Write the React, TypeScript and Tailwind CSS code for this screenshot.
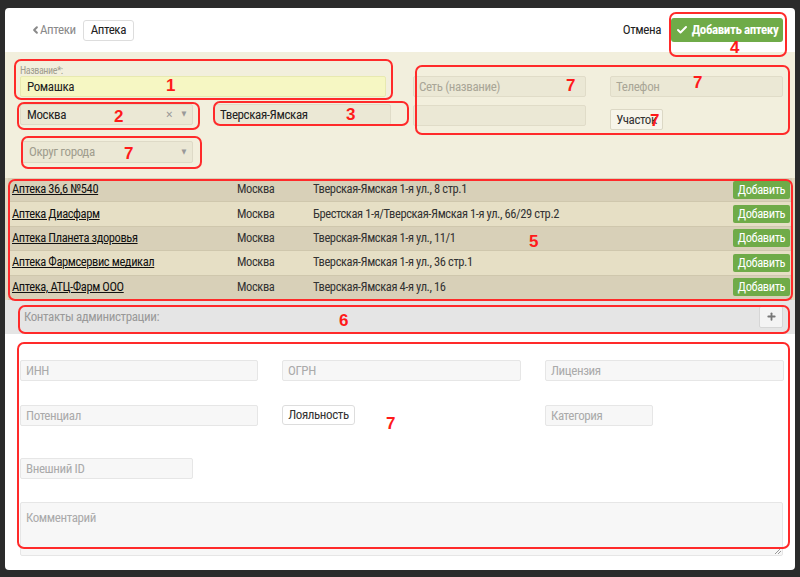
import { Check, ChevronLeft, Plus } from "lucide-react";

const FONT = "font-['Roboto_Condensed','Liberation_Sans_Narrow','DejaVu_Sans_Condensed',sans-serif] tracking-[-0.4px]";

const pharmacies = [
  { name: "Аптека 36,6 №540", city: "Москва", address: "Тверская-Ямская 1-я ул., 8 стр.1" },
  { name: "Аптека Диасфарм", city: "Москва", address: "Брестская 1-я/Тверская-Ямская 1-я ул., 66/29 стр.2" },
  { name: "Аптека Планета здоровья", city: "Москва", address: "Тверская-Ямская 1-я ул., 11/1" },
  { name: "Аптека Фармсервис медикал", city: "Москва", address: "Тверская-Ямская 1-я ул., 36 стр.1" },
  { name: "Аптека, АТЦ-Фарм ООО", city: "Москва", address: "Тверская-Ямская 4-я ул., 16" },
];

function Mark({ className }: { className: string }) {
  return <div className={`absolute border-2 border-[#ff2a2a] rounded-[7px] pointer-events-none ${className}`} />;
}

function Num({ className, n }: { className: string; n: string }) {
  return (
    <span className={`absolute font-['Liberation_Sans',sans-serif] tracking-normal font-bold text-[17px] leading-none text-[#ff1a1a] ${className}`}>
      {n}
    </span>
  );
}

function BeigeInput({ w, text, placeholder }: { w: string; text?: string; placeholder?: string }) {
  return (
    <div
      className={`${w} h-[21px] rounded-[2px] border border-[#e0dcc8] bg-[#ebe8d5] px-[5px] flex items-center text-[13px] ${
        text ? "text-[#222]" : "text-[#a9a697]"
      }`}
    >
      {text ?? placeholder}
    </div>
  );
}

function WhiteInput({ w, placeholder }: { w: string; placeholder: string }) {
  return (
    <div className={`${w} h-[21px] rounded-[2px] border border-[#e6e6e6] bg-[#f7f7f7] px-[5px] flex items-center text-[13px] text-[#aaa]`}>
      {placeholder}
    </div>
  );
}

export default function App() {
  return (
    <div className={`relative w-[800px] h-[577px] bg-[#2b2b2b] pt-[8px] px-[5px] overflow-hidden ${FONT}`}>
      <div className="h-[562px] bg-white rounded-[4px] overflow-hidden flex flex-col">
        {/* header */}
        <div className="h-[44px] flex items-center justify-between pl-[25px] pr-[12px]">
          <div className="flex items-center gap-[7px]">
            <span className="flex items-center text-[13px] text-[#8a8a8a]">
              <ChevronLeft className="w-[11px] h-[12px] -mr-[1px]" strokeWidth={4.5} />
              Аптеки
            </span>
            <span className="h-[21px] px-[7px] flex items-center rounded-[3px] border border-[#ddd] text-[13px] text-[#222]">Аптека</span>
          </div>
          <div className="flex items-center gap-[10px]">
            <span className="text-[13px] text-[#222]">Отмена</span>
            <button className="h-[24px] w-[112px] rounded-[3px] bg-[#6fab48] flex items-center justify-center gap-[4px] text-[13px] font-bold text-white">
              <Check className="w-[12px] h-[12px]" strokeWidth={4} />
              Добавить аптеку
            </button>
          </div>
        </div>

        {/* beige form */}
        <div className="h-[126px] bg-[#f2efdd] flex pl-[15px] pt-[13px]">
          <div className="w-[371px] flex flex-col">
            <span className="h-[11px] text-[10px] leading-[11px] text-[#a09d8e]">Название*:</span>
            <div className="h-[21px] w-[366px] rounded-[2px] border border-[#e8e9b0] bg-[#f6f7c3] px-[6px] flex items-center text-[13px] text-[#222]">
              Ромашка
            </div>
            <div className="mt-[7px] flex gap-[21px]">
              <div className="w-[174px] h-[21px] rounded-[2px] border border-[#dedac7] bg-[#ebe8d5] pl-[6px] pr-[6px] flex items-center text-[13px] text-[#222]">
                <span className="flex-1">Москва</span>
                <span className="text-[10px] text-[#999] mr-[9px]">✕</span>
                <span className="text-[7px] text-[#999]">▼</span>
              </div>
              <BeigeInput w="w-[178px]" text="Тверская-Ямская" />
            </div>
            <div className="mt-[16px] ml-[2px] w-[171px] h-[22px] rounded-[2px] border border-[#dedac7] bg-[#ebe8d5] px-[6px] flex items-center text-[13px] text-[#a09d8e]">
              <span className="flex-1">Округ города</span>
              <span className="text-[7px] text-[#999]">▼</span>
            </div>
          </div>
          <div className="ml-[22px] pt-[11px] grid grid-cols-[173px_173px] gap-x-[24px] gap-y-[8px] content-start">
            <BeigeInput w="w-[173px]" placeholder="Сеть (название)" />
            <BeigeInput w="w-[173px]" placeholder="Телефон" />
            <BeigeInput w="w-[173px]" />
            <div className="mt-[4px] w-[53px] h-[21px] rounded-[2px] border border-[#dcd8c5] bg-[#f7f5ea] flex items-center justify-center text-[13px] text-[#333]">
              Участок
            </div>
          </div>
        </div>

        {/* table */}
        <div className="px-[3px] bg-[#e0d9c1]">
          {pharmacies.map((p, i) => (
            <div
              key={p.name}
              className={`h-[24.4px] flex items-center text-[12.5px] text-[#333] border-b border-[#cfc7ad] ${
                i % 2 === 0 ? "bg-[#d8d0b8]" : "bg-[#e6dfc5]"
              }`}
            >
              <span className="w-[229px] pl-[4px] underline text-[#111]">{p.name}</span>
              <span className="w-[76px]">{p.city}</span>
              <span className="flex-1">{p.address}</span>
              <button className="mr-[2px] h-[18px] w-[57px] rounded-[2px] bg-[#6fab48] text-[12.5px] text-white">Добавить</button>
            </div>
          ))}
        </div>

        {/* contacts bar */}
        <div className="h-[34px] bg-[#e5e5e5] flex items-center justify-between pl-[19px] pr-[12px]">
          <span className="text-[13px] text-[#999]">Контакты администрации:</span>
          <span className="w-[24px] h-[22px] rounded-[2px] border border-[#d6d6d6] bg-[#f4f4f4] flex items-center justify-center">
            <Plus className="w-[11px] h-[11px] text-[#777]" strokeWidth={4} />
          </span>
        </div>

        {/* white form */}
        <div className="flex-1 px-[15px] pt-[26px]">
          <div className="grid grid-cols-[238px_239px_239px] gap-x-[24px]">
            <WhiteInput w="w-[238px]" placeholder="ИНН" />
            <WhiteInput w="w-[239px]" placeholder="ОГРН" />
            <WhiteInput w="w-[239px]" placeholder="Лицензия" />
          </div>
          <div className="mt-[24px] grid grid-cols-[238px_239px_239px] gap-x-[24px] items-start">
            <WhiteInput w="w-[238px]" placeholder="Потенциал" />
            <div className="w-[73px] h-[20px] rounded-[3px] border border-[#ddd] bg-white flex items-center justify-center text-[13px] text-[#333]">
              Лояльность
            </div>
            <WhiteInput w="w-[108px]" placeholder="Категория" />
          </div>
          <div className="mt-[32px]">
            <WhiteInput w="w-[173px]" placeholder="Внешний ID" />
          </div>
          <div className="relative mt-[23px] h-[54px] w-[763px] rounded-[2px] border border-[#e6e6e6] bg-[#f7f7f7] px-[5px] pt-[5px] text-[13px] text-[#aaa]">
            Комментарий
            <svg className="absolute right-[1px] bottom-[1px] w-[6px] h-[6px]" viewBox="0 0 6 6">
              <path d="M6 0 L0 6 M6 3 L3 6" stroke="#999" strokeWidth="1" />
            </svg>
          </div>
        </div>
      </div>

      {/* annotations */}
      <Mark className="left-[14px] top-[59px] w-[379px] h-[41px]" />
      <Num className="left-[166px] top-[77px]" n="1" />
      <Mark className="left-[669px] top-[12px] w-[118px] h-[45px]" />
      <Num className="left-[730px] top-[39px]" n="4" />
      <Mark className="left-[17px] top-[102px] w-[183px] h-[28px]" />
      <Num className="left-[114px] top-[108px]" n="2" />
      <Mark className="left-[213px] top-[101px] w-[196px] h-[25px]" />
      <Num className="left-[346px] top-[106px]" n="3" />
      <Mark className="left-[415px] top-[65px] w-[375px] h-[70px]" />
      <Num className="left-[566px] top-[77px]" n="7" />
      <Num className="left-[693px] top-[74px]" n="7" />
      <Num className="left-[650px] top-[112px]" n="7" />
      <Mark className="left-[21px] top-[136px] w-[181px] h-[33px]" />
      <Num className="left-[124px] top-[145px]" n="7" />
      <Mark className="left-[8px] top-[179px] w-[785px] h-[122px]" />
      <Num className="left-[529px] top-[233px]" n="5" />
      <Mark className="left-[18px] top-[305px] w-[772px] h-[29px]" />
      <Num className="left-[339px] top-[312px]" n="6" />
      <Mark className="left-[17px] top-[342px] w-[773px] h-[207px]" />
      <Num className="left-[386px] top-[415px]" n="7" />
    </div>
  );
}
